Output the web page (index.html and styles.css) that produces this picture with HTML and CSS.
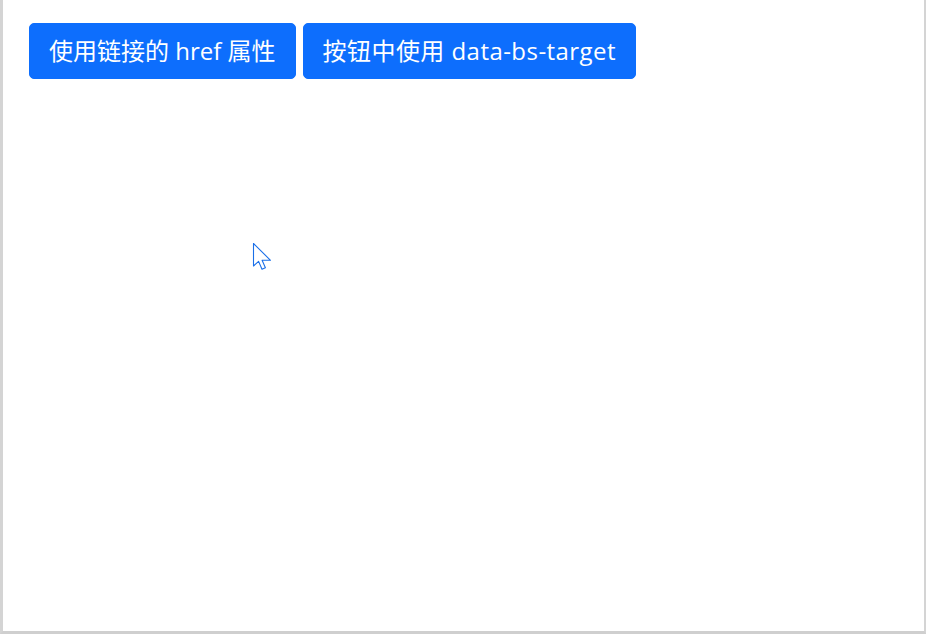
FILE: index.html
```html
<!DOCTYPE html>
<html lang="zh-CN">
<head>
<meta charset="utf-8">
<title>Offcanvas</title>
<link rel="stylesheet" href="styles.css">
</head>
<body>
<div class="frame">
  <div class="actions">
    <a class="btn" href="#offcanvasExample">使用链接的 href 属性</a>
    <button class="btn btn-target" type="button">按钮中使用 data-bs-target</button>
  </div>
  <svg class="cursor" width="22" height="30" viewBox="0 0 22 30" aria-hidden="true">
    <path d="M1.5 1.5 L1.5 24 L6.6 19.4 L10 27.2 L13.4 25.7 L10.1 18.3 L18.5 18.3 Z" fill="#fff" stroke="#1a6fe8" stroke-width="1.1" stroke-linejoin="round"/>
  </svg>
</div>
</body>
</html>
```
FILE: styles.css
```css
html, body {
  margin: 0;
  padding: 0;
  background: #fff;
}
.frame {
  position: relative;
  width: 926px;
  height: 634px;
  box-sizing: border-box;
  border-left: 3px solid #d4d4d4;
  border-right: 2px solid #d4d4d4;
  border-bottom: 3px solid #cfcfcf;
  padding: 23px 0 0 26px;
  font-family: "Open Sans", "Noto Sans CJK SC", sans-serif;
}
.actions {
  display: flex;
  gap: 7px;
}
.btn {
  display: inline-flex;
  align-items: center;
  justify-content: center;
  height: 56px;
  box-sizing: border-box;
  padding: 0 19px;
  background: #0d6efd;
  color: #fff;
  border: 1px solid #0d6efd;
  border-radius: 5px;
  font-family: inherit;
  font-size: 24px;
  line-height: 1;
  text-decoration: none;
  cursor: pointer;
}
.btn-target {
  letter-spacing: 0.45px;
}
.cursor {
  position: absolute;
  left: 248.5px;
  top: 241.5px;
}
```
